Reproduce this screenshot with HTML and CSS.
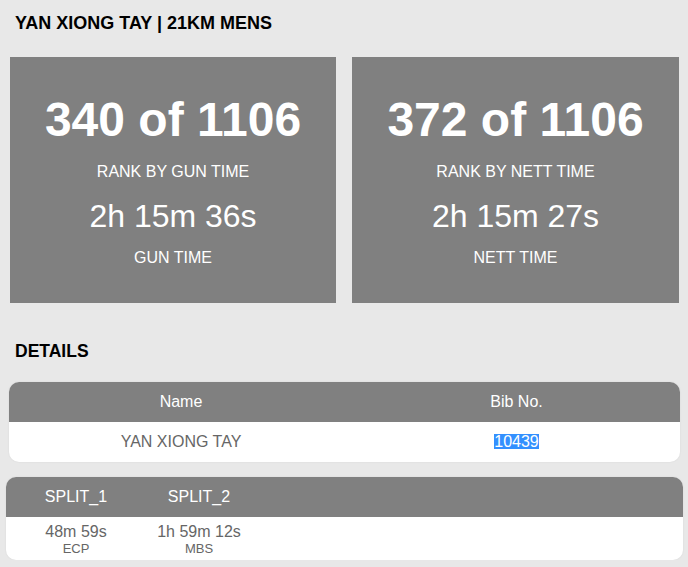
FILE: index.html
```html
<!DOCTYPE html>
<html lang="en">

<head>
    <meta charset="UTF-8">
    <meta name="viewport" content="width=device-width, initial-scale=1.0">
    <title>Yan Xiong Tay - 21KM Mens</title>
    <link rel="stylesheet" href="styles.css">
</head>

<body>
    <h2 class="title">YAN XIONG TAY | 21KM MENS</h2>

    <div class="cards">
        <div class="card">
            <div class="rank">340 of 1106</div>
            <div class="label">RANK BY GUN TIME</div>
            <div class="time">2h 15m 36s</div>
            <div class="label label-last">GUN TIME</div>
        </div>
        <div class="card">
            <div class="rank">372 of 1106</div>
            <div class="label">RANK BY NETT TIME</div>
            <div class="time">2h 15m 27s</div>
            <div class="label label-last">NETT TIME</div>
        </div>
    </div>

    <h2 class="title details-title">DETAILS</h2>

    <div class="table-wrap details">
        <table>
            <thead>
                <tr>
                    <th class="col-name">Name</th>
                    <th>Bib No.</th>
                </tr>
            </thead>
            <tbody>
                <tr>
                    <td>YAN XIONG TAY</td>
                    <td><span class="selected">10439</span></td>
                </tr>
            </tbody>
        </table>
    </div>

    <div class="table-wrap splits">
        <table>
            <thead>
                <tr>
                    <th class="split-1">SPLIT_1</th>
                    <th class="split-2">SPLIT_2</th>
                    <th></th>
                </tr>
            </thead>
            <tbody>
                <tr>
                    <td>48m 59s<span class="point">ECP</span></td>
                    <td>1h 59m 12s<span class="point">MBS</span></td>
                    <td></td>
                </tr>
            </tbody>
        </table>
    </div>
</body>

</html>
```

FILE: styles.css
```css
body {
    font-family: "Liberation Sans", Arial, sans-serif;
    background-color: #e8e8e8;
    margin: 0;
    padding: 0;
}

.title {
    margin: 0;
    padding: 13px 15px 0;
    font-size: 18px;
    line-height: 20px;
    font-weight: bold;
    color: #000;
}

.cards {
    display: grid;
    grid-template-columns: 326px 327px;
    gap: 16px;
    padding: 0 9px 0 10px;
    margin-top: 24px;
}

.card {
    background-color: #808080;
    color: #fff;
    text-align: center;
    padding: 39px 0 37px;
}

.rank {
    font-size: 48px;
    line-height: 48px;
    font-weight: bold;
}

.label {
    font-size: 16px;
    line-height: 16px;
    margin-top: 20px;
}

.label-last {
    margin-top: 18px;
}

.time {
    font-size: 32px;
    line-height: 32px;
    margin-top: 20px;
}

.details-title {
    padding-top: 38px;
    font-size: 17.5px;
}

.table-wrap {
    background-color: #fff;
    border-radius: 10px;
    overflow: hidden;
    box-shadow: 0 0 2px rgba(0, 0, 0, 0.08);
}

.details {
    margin: 21px 8px 0 9px;
}

.splits {
    margin: 15px 5px 0 6px;
}

table {
    width: 100%;
    border-collapse: collapse;
    font-size: 16px;
}

th {
    background-color: #808080;
    color: #fff;
    font-weight: normal;
    height: 40px;
    padding: 0;
}

td {
    color: #666;
    text-align: center;
    padding: 0;
}

.details .col-name {
    width: 344px;
}

.details td {
    height: 40px;
}

.selected {
    display: inline-block;
    background-color: #3390ff;
    color: #fff;
    line-height: 15px;
}

.splits .split-1 {
    width: 140px;
}

.splits .split-2 {
    width: 106px;
}

.splits td {
    padding: 6px 0 4px;
    line-height: 18px;
    vertical-align: top;
}

.point {
    display: block;
    font-size: 13px;
    line-height: 15px;
}
```
